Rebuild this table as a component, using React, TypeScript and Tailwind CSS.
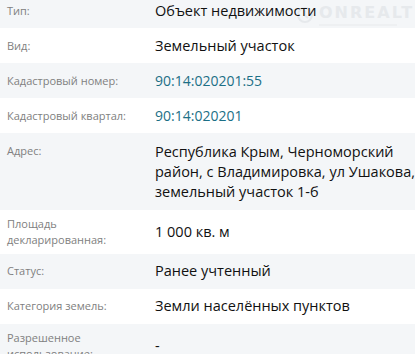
import React from "react";

interface Field {
  label: string[];
  value: string[];
  link?: boolean;
}

const FIELDS: Field[] = [
  { label: ["Тип:"], value: ["Объект недвижимости"] },
  { label: ["Вид:"], value: ["Земельный участок"] },
  { label: ["Кадастровый номер:"], value: ["90:14:020201:55"], link: true },
  { label: ["Кадастровый квартал:"], value: ["90:14:020201"], link: true },
  {
    label: ["Адрес:"],
    value: ["Республика Крым, Черноморский", "район, с Владимировка, ул Ушакова,", "земельный участок 1-б"],
  },
  { label: ["Площадь", "декларированная:"], value: ["1 000 кв. м"] },
  { label: ["Статус:"], value: ["Ранее учтенный"] },
  { label: ["Категория земель:"], value: ["Земли населённых пунктов"] },
  { label: ["Разрешенное", "использование:"], value: ["-"] },
];

// faint site watermark in the top right corner
function Watermark() {
  return (
    <div className="absolute left-[296px] top-[4px] flex items-center gap-[5px] pointer-events-none">
      <svg width="18" height="18" viewBox="0 0 18 18" fill="none" stroke="#e6e9ec" strokeWidth="2">
        <circle cx="9" cy="9" r="7" />
        <path d="M9 4.5v5l3 2.5" />
      </svg>
      <div className="flex flex-col">
        <span className="text-[16px] leading-[18px] font-bold tracking-[2px] text-[#e6e9ec] font-['DejaVu_Sans',sans-serif]">
          ONREALT
        </span>
        <span className="mt-[2px] h-[2px] w-[78px] bg-[#eef0f2]" />
      </div>
    </div>
  );
}

export default function App() {
  return (
    <div className="relative w-[415px] h-[354px] overflow-hidden bg-white font-['Open_Sans',sans-serif]">
      <div className="-mt-[7px]">
        {FIELDS.map((f, i) => {
          const tall = f.value.length > 1;
          return (
            <div
              key={i}
              className={`flex ${i % 2 === 0 ? "bg-[#f4f6f8]" : "bg-white"}`}
            >
              <div
                className={`w-[155px] shrink-0 pl-[7px] py-[6px] text-[11px] leading-4 text-[#808080] ${
                  tall ? "self-start pt-[10px]" : "self-center"
                }`}
              >
                {f.label.map((l) => (
                  <div key={l}>{l}</div>
                ))}
              </div>
              <div
                className={`relative z-10 flex-1 self-center py-[7.5px] leading-5 ${
                  f.link ? "text-[14px] text-[#1c6f86]" : "text-[14.5px] text-[#111]"
                } ${tall ? "pt-[9px]" : ""}`}
              >
                {f.value.map((v) => (
                  <div key={v} className="whitespace-nowrap">
                    {v}
                  </div>
                ))}
              </div>
            </div>
          );
        })}
      </div>
      <Watermark />
    </div>
  );
}
